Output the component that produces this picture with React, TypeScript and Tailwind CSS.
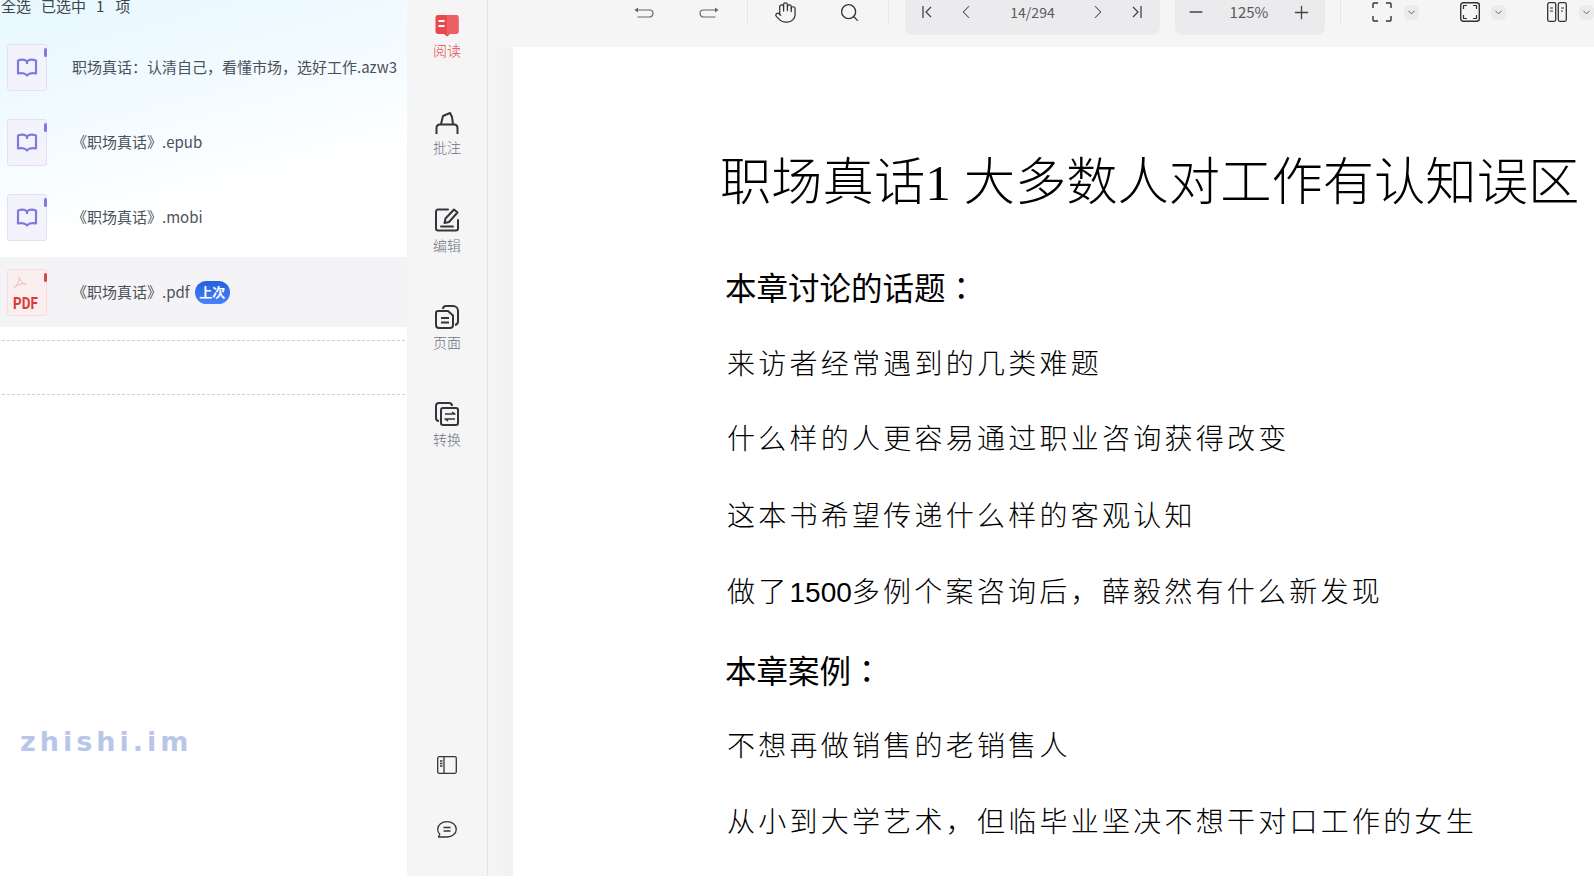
import React from 'react';
import { Hand, Search, Minus, Plus, ChevronLeft, ChevronRight, ChevronDown } from 'lucide-react';

const UI_FONT = { fontFamily: '"Noto Sans CJK SC", "Noto Sans", sans-serif' };

function BookFileIcon() {
  return (
    <div className="relative w-10 h-[47px] rounded-[3px] bg-[#f4f3fc] border border-[#e2e0f5] flex items-center justify-center shrink-0">
      <div className="absolute right-[-1px] top-[3px] w-[3px] h-[9px] rounded-sm bg-[#8079e2]" />
      <svg width="22" height="20" viewBox="0 0 22 20" fill="none" stroke="#7f78e0" strokeWidth="2.2" strokeLinejoin="round">
        <path d="M2 2.500c3-1 7-1 9 1 2-2 6-2 9-1v13c-3-.6-6-.6-8 1l-1 1-1-1c-2-1.600-5-1.600-8-1z" />
        <path d="M11 4v2" />
      </svg>
    </div>
  );
}

function PdfFileIcon() {
  return (
    <div className="relative w-10 h-[47px] rounded-[3px] bg-[#fbeeee] border border-[#f6dcdc] shrink-0">
      <div className="absolute right-[-1px] top-[3px] w-[3px] h-[9px] rounded-sm bg-[#e04545]" />
      <svg className="absolute left-[5px] top-[6px]" width="14" height="14" viewBox="0 0 14 14" fill="none" stroke="#f0b9b9" strokeWidth="1">
        <path d="M6 1c1 3-1 7-5 11 4-4 8-5 12-4-3 0-6-3-7-7z" />
      </svg>
      <span className="absolute left-[5px] top-[25px] text-[16px] leading-[18px] font-bold text-[#d83a3a] scale-x-[0.84] origin-left" style={{ fontFamily: '"Roboto", sans-serif' }}>PDF</span>
    </div>
  );
}

function FileRow({ name, pdf, last, active }: { name: string; pdf?: boolean; last?: boolean; active?: boolean }) {
  return (
    <div className={`flex items-center pl-[7px] ${active ? 'bg-[#f4f4f6] h-[70px] mt-[2px]' : 'h-[75px]'}`}>
      {pdf ? <PdfFileIcon /> : <BookFileIcon />}
      <span className="ml-[25px] text-[15px] text-[#4b5059] whitespace-nowrap">{name}</span>
      {last && (
        <span className="ml-[5px] w-[35px] h-[23px] rounded-full bg-gradient-to-b from-[#2461dd] to-[#4a80fb] text-white text-[13px] font-bold flex items-center justify-center">
          上次
        </span>
      )}
    </div>
  );
}

function RailItem({ label, icon, active }: { label: string; icon: React.ReactNode; active?: boolean }) {
  return (
    <div className="flex flex-col items-center h-[97px]">
      {icon}
      <span className={`text-[14px] leading-[20px] font-light mt-[3px] ${active ? 'text-[#e2474c]' : 'text-[#6d7280]'}`}>{label}</span>
    </div>
  );
}

function Tb({ w, children }: { w: string; children?: React.ReactNode }) {
  return <div className={`${w} h-[24px] flex items-center justify-center shrink-0`}>{children}</div>;
}

function Caret() {
  return (
    <div className="w-[15px] h-[15px] mt-[5px] rounded-[5px] bg-[#ebebed] flex items-center justify-center shrink-0">
      <ChevronDown size={11} color="#444" strokeWidth={1.8} />
    </div>
  );
}

const BODY = 'ml-[5px] h-[40px] text-[28px] leading-[40px] font-light tracking-[3.250px]';
const HEAD = 'ml-[3px] h-[40px] text-[31.500px] leading-[40px]';

export default function App() {
  return (
    <div className="w-[1594px] h-[881px] bg-white overflow-hidden" style={UI_FONT}>
      <div className="flex h-[876px]">
        {/* 文件列表 */}
        <aside className="w-[407px] shrink-0 overflow-hidden bg-[linear-gradient(165deg,#e6f8ff_0%,#f3fbff_15%,#ffffff_26%)]">
          <div className="h-[31px] -mt-[1px] pl-[1px] text-[15px] leading-[14px] text-[#3f444b] flex whitespace-nowrap">
            <span>全选</span>
            <span className="ml-[10px]">已选中</span>
            <span className="ml-[10px]">1</span>
            <span className="ml-[11px]">项</span>
          </div>
          <FileRow name="职场真话：认清自己，看懂市场，选好工作.azw3" />
          <FileRow name="《职场真话》.epub" />
          <FileRow name="《职场真话》.mobi" />
          <FileRow name="《职场真话》.pdf" pdf last active />
          <div className="mt-[13px] mx-[2px] border-t border-dashed border-[#cfcfd2]" />
          <div className="mt-[53px] mx-[2px] border-t border-dashed border-[#cfcfd2]" />
          <div className="mt-[327px] ml-[20px] text-[27px] leading-[40px] font-bold tracking-[4px] text-[#b9c6ea]" style={{ fontFamily: '"DejaVu Sans", sans-serif' }}>
            zhishi.im
          </div>
        </aside>

        {/* 功能栏 */}
        <nav className="w-[81px] shrink-0 bg-[#f5f5f6] border-r border-[#e3e3e5] flex flex-col items-center pt-[14px]">
          <RailItem
            label="阅读"
            active
            icon={
              <svg width="24" height="23" viewBox="0 0 24 23" fill="#e9484d">
                <path d="M3 1h8c.6 0 1 .3 1 .3s.4-.3 1-.3h8c1.500 0 2.500 1 2.500 2.500v14c0 1.500-1 2.500-2.500 2.500h-6l-3 2.500-3-2.500H3c-1.500 0-2.500-1-2.500-2.500v-14C.5 2 1.500 1 3 1z" />
                <path d="M13 1h8c1.500 0 2.500 1 2.500 2.500v14c0 1.500-1 2.500-2.500 2.500h-6l-3 2.500V1.300c0 0 .4-.3 1-.3z" fill="#ee5f63" />
                <rect x="3.500" y="6" width="6" height="2" fill="#fff" />
                <rect x="3.500" y="11" width="6" height="2" fill="#fff" />
              </svg>
            }
          />
          <RailItem
            label="批注"
            icon={
              <svg className="mt-[1px] -mb-[1px]" width="24" height="23" viewBox="0 0 24 23" fill="none" stroke="#33353a" strokeWidth="2" strokeLinejoin="round">
                <path d="M1.500 22v-6c0-2 1.500-3.500 3.500-3.500h14c2 0 3.500 1.500 3.500 3.500v6" />
                <path d="M6 12l2-8 7-3 2 4 1 7" />
              </svg>
            }
          />
          <RailItem
            label="编辑"
            icon={
              <svg width="24" height="24" viewBox="0 0 24 24" fill="none" stroke="#33353a" strokeWidth="2" strokeLinecap="round" strokeLinejoin="round">
                <path d="M13 1.500H3A2 2 0 0 0 1 3.500v17a2 2 0 0 0 2 2h18a2 2 0 0 0 2-2V12" />
                <path d="M19 1.500l3.500 3-8.500 9.500-4.500 1 1-4.500z" />
                <path d="M6 18.500h12" />
              </svg>
            }
          />
          <RailItem
            label="页面"
            icon={
              <svg width="24" height="24" viewBox="0 0 24 24" fill="none" stroke="#33353a" strokeWidth="2" strokeLinejoin="round">
                <path d="M3 6h10l5 4.500V20a3 3 0 0 1-3 3H4a3 3 0 0 1-3-3V8a2 2 0 0 1 2-2z" />
                <path d="M8 4a3 3 0 0 1 3-3h7a5 5 0 0 1 5 5v10a4 4 0 0 1-3 4" />
                <path d="M6 13h8M6 17.500h8" />
              </svg>
            }
          />
          <RailItem
            label="转换"
            icon={
              <svg width="24" height="24" viewBox="0 0 24 24" fill="none" stroke="#33353a" strokeWidth="2" strokeLinejoin="round">
                <path d="M4 19a3 3 0 0 1-3-3V4a3 3 0 0 1 3-3h10a3 3 0 0 1 3 3" />
                <rect x="6" y="6" width="17" height="17" rx="2" />
                <path d="M10 12h10l-3-2M20 17H10l3 2" strokeWidth="1.500" />
              </svg>
            }
          />
          <div className="flex-1" />
          <div className="mb-[47px]">
            <svg width="20" height="18" viewBox="0 0 20 18" fill="none" stroke="#33353a" strokeWidth="1.300">
              <rect x="0.700" y="0.700" width="18.600" height="16.600" rx="1.500" />
              <path d="M7 1v16M3 5h2.500M3 7.500h2.500M3 10h2.500" />
            </svg>
          </div>
          <div className="mb-[37px]">
            <svg width="20" height="18" viewBox="0 0 20 18" fill="none" stroke="#33353a" strokeWidth="1.300" strokeLinejoin="round">
              <path d="M10 .7c5 0 9.300 3 9.300 7.500S15 16 10 16H1.500l1.300-2.800C1.300 12 .7 10 .7 8.200.7 3.700 5 .7 10 .7z" />
              <path d="M6.500 6.500h7M6.500 10h7" />
            </svg>
          </div>
        </nav>

        {/* 阅读区 */}
        <main className="flex-1 min-w-0 flex flex-col bg-[#f5f5f5]">
          <header className="h-[47px] shrink-0 flex items-start">
            <div className="w-[144px] shrink-0" />
            <Tb w="w-[24px]">
              <svg width="20" height="12" viewBox="0 0 20 12" fill="none" stroke="#666" strokeWidth="1.200" strokeLinecap="round">
                <path d="M3 4h12.500a3.500 3.500 0 0 1 0 7H4" />
                <path d="M.5 4L4 1.500v5z" fill="#666" stroke="none" />
              </svg>
            </Tb>
            <div className="w-[41px] shrink-0" />
            <Tb w="w-[24px]">
              <svg width="20" height="12" viewBox="0 0 20 12" fill="none" stroke="#666" strokeWidth="1.200" strokeLinecap="round">
                <path d="M17 4H4.500a3.500 3.500 0 0 0 0 7H16" />
                <path d="M19.500 4L16 1.500v5z" fill="#666" stroke="none" />
              </svg>
            </Tb>
            <div className="w-[26px] shrink-0" />
            <div className="w-px h-[25px] bg-[#e6e6e6] shrink-0" />
            <div className="w-[25px] shrink-0" />
            <Tb w="w-[24px]"><Hand size={23} color="#333" strokeWidth={1.3} /></Tb>
            <div className="w-[40px] shrink-0" />
            <Tb w="w-[24px]"><Search size={21} color="#333" strokeWidth={1.5} /></Tb>
            <div className="w-[27px] shrink-0" />
            <div className="w-px h-[25px] bg-[#e6e6e6] shrink-0" />
            <div className="w-[16px] shrink-0" />
            <div className="w-[255px] h-[35px] rounded-b-lg bg-[#ebebed] flex items-start shrink-0">
              <div className="w-[12px] shrink-0" />
              <Tb w="w-[22px]">
                <svg width="14" height="14" viewBox="0 0 14 14" fill="none" stroke="#444" strokeWidth="1.300"><path d="M2 1v12M10 2l-5 5 5 5" /></svg>
              </Tb>
              <div className="w-[16px] shrink-0" />
              <Tb w="w-[22px]"><ChevronLeft size={24} color="#444" strokeWidth={1.1} /></Tb>
              <span className="w-[110px] pl-[1px] text-center text-[14px] leading-[24px] text-[#5a5a5c]">14/294</span>
              <Tb w="w-[22px]"><ChevronRight size={24} color="#444" strokeWidth={1.1} /></Tb>
              <div className="w-[16px] shrink-0" />
              <Tb w="w-[22px]">
                <svg width="14" height="14" viewBox="0 0 14 14" fill="none" stroke="#444" strokeWidth="1.300"><path d="M12 1v12M4 2l5 5-5 5" /></svg>
              </Tb>
            </div>
            <div className="w-[15px] shrink-0" />
            <div className="w-[150px] h-[35px] rounded-b-lg bg-[#ebebed] flex items-start shrink-0">
              <div className="w-[10px] shrink-0" />
              <Tb w="w-[22px]"><Minus size={20} color="#444" strokeWidth={1.7} /></Tb>
              <span className="w-[83px] pl-[1px] text-center text-[15px] leading-[24px] text-[#5a5a5c]">125%</span>
              <Tb w="w-[22px]"><Plus size={21} color="#444" strokeWidth={1.5} /></Tb>
            </div>
            <div className="w-[15px] shrink-0" />
            <div className="w-px h-[25px] bg-[#e6e6e6] shrink-0" />
            <div className="w-[29px] shrink-0" />
            <Tb w="w-[24px]">
              <svg width="20" height="20" viewBox="0 0 20 20" fill="none" stroke="#333" strokeWidth="1.400">
                <path d="M1 6V2a1 1 0 0 1 1-1h4M14 1h4a1 1 0 0 1 1 1v4M19 14v4a1 1 0 0 1-1 1h-4M6 19H2a1 1 0 0 1-1-1v-4" />
              </svg>
            </Tb>
            <div className="w-[10px] shrink-0" />
            <Caret />
            <div className="w-[39px] shrink-0" />
            <Tb w="w-[24px]">
              <svg width="20" height="20" viewBox="0 0 20 20" fill="none" stroke="#333" strokeWidth="1.200">
                <rect x="0.700" y="0.700" width="18.600" height="18.600" rx="2.500" strokeWidth="1.400" />
                <path d="M3.500 7V3.500H7M13 3.500h3.500V7M16.500 13v3.500H13M7 16.500H3.500V13" />
              </svg>
            </Tb>
            <div className="w-[9px] shrink-0" />
            <Caret />
            <div className="w-[39px] shrink-0" />
            <Tb w="w-[24px]">
              <svg width="20" height="20" viewBox="0 0 20 20" fill="none" stroke="#333" strokeWidth="1.300">
                <rect x="0.700" y="0.700" width="8" height="18.600" rx="1.500" />
                <rect x="11.300" y="0.700" width="8" height="18.600" rx="1.500" />
                <path d="M3 6h3M3 9h3M14 6h3M14 9h2" strokeWidth="1" />
              </svg>
            </Tb>
            <div className="w-[10px] shrink-0" />
            <Caret />
          </header>

          <div className="flex-1 min-h-0 flex">
            <div className="w-[25px] shrink-0 bg-gradient-to-r from-[#f6f6f6] to-[#f1f1f1]" />
            {/* PDF 页面 */}
            <article className="flex-1 min-w-0 bg-white pl-[209px] overflow-hidden text-black whitespace-nowrap">
              <h1 className="mt-[106px] -ml-[2px] h-[60px] text-[51.300px] leading-[60px] font-light" style={{ fontFamily: '"Liberation Serif", "Noto Sans CJK SC", serif' }}>职场真话1 大多数人对工作有认知误区</h1>
              <h2 className={`mt-[53px] ${HEAD}`}>本章讨论的话题<span style={{ fontFamily: '"Noto Sans CJK TC", sans-serif' }}>：</span></h2>
              <p className={`mt-[36px] ${BODY}`}>来访者经常遇到的几类难题</p>
              <p className={`mt-[35px] ${BODY}`}>什么样的人更容易通过职业咨询获得改变</p>
              <p className={`mt-[37px] ${BODY}`}>这本书希望传递什么样的客观认知</p>
              <p className={`mt-[36px] ${BODY}`}>
                做了<span className="tracking-normal font-normal" style={{ fontFamily: '"Liberation Sans", sans-serif' }}>1500</span>多例个案咨询后，薛毅然有什么新发现
              </p>
              <h2 className={`mt-[39px] ${HEAD}`}>本章案例<span style={{ fontFamily: '"Noto Sans CJK TC", sans-serif' }}>：</span></h2>
              <p className={`mt-[35px] ${BODY}`}>不想再做销售的老销售人</p>
              <p className={`mt-[36px] ${BODY}`}>从小到大学艺术，但临毕业坚决不想干对口工作的女生</p>
            </article>
          </div>
        </main>
      </div>
    </div>
  );
}
